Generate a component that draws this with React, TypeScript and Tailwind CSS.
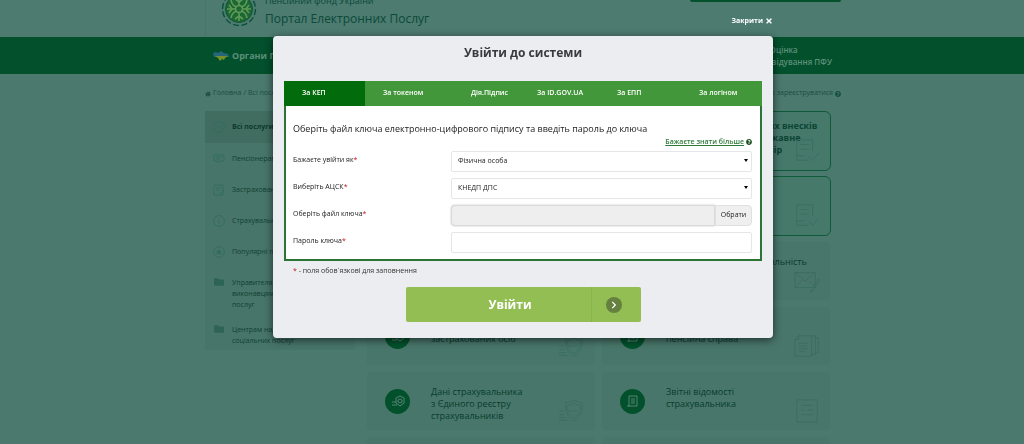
import { useState } from 'react';
import type { ReactNode } from 'react';
import { FaHome, FaTimes, FaQuestionCircle, FaFolder, FaChevronRight } from 'react-icons/fa';

const tabs = ['За КЕП', 'За токеном', 'Дія.Підпис', 'За ID.GOV.UA', 'За ЕПП', 'За логіном'];

const menu = [
  { label: 'Всі послуги', icon: 'minus' },
  { label: 'Пенсіонерам', icon: 'card' },
  { label: 'Застрахованим особам', icon: 'doc' },
  { label: 'Страхувальникам', icon: 'info' },
  { label: 'Популярні послуги', icon: 'star' },
  { label: 'Управителям та виконавцям усіх послуг', icon: 'folder' },
  { label: 'Центрам надання соціальних послуг', icon: 'folder' },
];

type Card = { lines: string[]; mark: string; outlined?: boolean };

const cards: Card[] = [
  { lines: ['Запис на прийом'], mark: 'check', outlined: true },
  { lines: ['Облік сплати страхових внесків', 'на загальне чи на державне', 'страхування або договір'], mark: 'check', outlined: true },
  { lines: ['Звернення'], mark: 'check', outlined: true },
  { lines: ['Мої заяви'], mark: 'check', outlined: true },
  { lines: ['Електронна пенсія'], mark: 'mail' },
  { lines: ['Моя підприємницька діяльність'], mark: 'mail' },
  { lines: ['Дані з реєстру', 'застрахованих осіб'], mark: 'shield' },
  { lines: ['Електронна', 'пенсійна справа'], mark: 'papers' },
  { lines: ['Дані страхувальника', 'з Єдиного реєстру', 'страхувальників'], mark: 'shield' },
  { lines: ['Звітні відомості', 'страхувальника'], mark: 'sheet' },
  { lines: ['Повідомлення'], mark: 'shield' },
  { lines: ['Довідки'], mark: 'sheet' },
];

function Logo() {
  return (
    <svg viewBox="0 0 36 36" className="h-9 w-9" fill="none">
      <circle cx="18" cy="18" r="16.5" stroke="#0b4f3c" strokeWidth="1.4" strokeDasharray="6 2.6" />
      <circle cx="18" cy="18" r="13.5" fill="#1d6733" stroke="#0f5836" />
      <g stroke="#5f9a58" strokeWidth="1.6">
        <path d="M18 6v24M6 18h24" />
        <circle cx="18" cy="18" r="3.5" fill="#1d6733" />
        <path d="M10 9c1 5 3 6 6 7M26 9c-1 5-3 6-6 7M10 27c1-5 3-6 6-7M26 27c-1-5-3-6-6-7" />
        <path d="M14 8l4 3 4-3M14 28l4-3 4 3M8 14l3 4-3 4M28 14l-3 4 3 4" />
      </g>
    </svg>
  );
}

function MenuIcon({ name }: { name: string }) {
  if (name === 'folder') return <FaFolder className="h-2.5 w-3 text-[#2d6453]" />;
  return (
    <svg viewBox="0 0 12 12" className="h-3 w-3" fill="none" stroke="#2f6c5b" strokeWidth="0.8">
      {name === 'card' && <path d="M1 2h10v6H7L5 10V8H1zM3 4h6M3 6h4" />}
      {name === 'doc' && <path d="M1 1h9v10H1zM3 4h5M3 6h3M6 8l2 2 3-4" />}
      {(name === 'minus' || name === 'info' || name === 'star') && <circle cx="6" cy="6" r="5.4" />}
      {name === 'minus' && <path d="M3.5 6h5" />}
      {name === 'info' && <path d="M6 5v4M6 3v1" />}
      {name === 'star' && <path d="M6 3.5L8 8.5 3.5 5.5h5L4 8.5z" />}
    </svg>
  );
}

function Mark({ name }: { name: string }) {
  return (
    <svg viewBox="0 0 28 28" className="absolute bottom-1.5 right-2.5 h-[26px] w-[26px]" fill="none" stroke="#396e60" strokeWidth="1">
      {name === 'check' && <path d="M20 14V2H3v22h13M7 7h9M7 12h9M2 19h9M16 20l4 4 7-8" />}
      {name === 'mail' && <path d="M1 5h22v16H1zM1 5l11 9L23 5M1 21l8-8M23 21l-6-7M18 24l8-12 2 1-8 12-3 1z" />}
      {name === 'shield' && <path d="M16 2c3 2 6 3 9 3 1 8-1 15-9 20-7-4-9-10-9-20 3 0 6-1 9-3zM16 5c2 2 4 3 7 3 0 6-2 11-7 14-5-3-7-8-7-14 3 0 5-1 7-3zM12 14h8M1 14h4M0 18h6M0 21h8M0 24h10" />}
      {name === 'papers' && <path d="M5 3h14v22H1V7zM19 3h4v20h-4M23 5h3v16h-3M5 3v4H1M5 11h10M5 14h10M5 17h10M5 20h7" />}
      {name === 'sheet' && <path d="M3 2h22v24H3zM8 8h12M8 13h3M15 13h6M8 18h12" />}
    </svg>
  );
}

function ServiceCard({ lines, mark, outlined }: Card) {
  return (
    <a
      href="#"
      className={`relative flex h-[60px] items-center gap-[21px] rounded-md border pl-[18px] text-[9px] leading-3 ${
        outlined ? 'border-[#0f5a38] bg-[#47796b] font-bold text-[#0a4534]' : 'border-[#4a786c] bg-[#49766a] text-[#063d2d]'
      }`}
    >
      <span className="flex h-[25px] w-[25px] shrink-0 items-center justify-center rounded-full bg-[#02512c]">
        <svg viewBox="0 0 14 14" className="h-3.5 w-3.5" fill="none" stroke="#568475">
          {mark === 'shield' ? (
            <path d="M5 4l4-2 4 2v5l-4 3-4-3zM7 6l2-1 2 1v2L9 9 7 8zM1 8h4M1 11h5" />
          ) : (
            <path d="M3 2h8v10H3zM5 5h4M5 7h4M5 9h4M1 12h3" />
          )}
        </svg>
      </span>
      <span className={`self-start whitespace-nowrap ${outlined ? 'pt-2' : 'pt-3.5'}`}>
        {lines.map((line) => (
          <span key={line} className="block">{line}</span>
        ))}
      </span>
      <Mark name={mark} />
    </a>
  );
}

function Field({ id, label, children }: { id: string; label: string; children: ReactNode }) {
  return (
    <div className="flex h-[21px]">
      <label htmlFor={id} className="w-[158px] shrink-0 pt-[3px] text-[7px] leading-3 text-[#222]">
        {label}<span className="text-[#c01818]">*</span>
      </label>
      {children}
    </div>
  );
}

function Select({ id, option }: { id: string; option: string }) {
  return (
    <div className="relative flex-1">
      <select id={id} className="block h-[21px] w-full appearance-none rounded-xs border border-[#e6e6e6] bg-white px-1.5 text-[7px] text-[#222]">
        <option>{option}</option>
      </select>
      <span className="pointer-events-none absolute right-1 top-2 border-x-2 border-t-3 border-x-transparent border-t-black" />
    </div>
  );
}

function LoginDialog() {
  const [active, setActive] = useState(0);

  return (
    <div role="dialog" aria-labelledby="login-title" className="rounded-sm bg-[#ecedf0] px-[11px] pb-4 shadow-[0_2px_8px_rgba(0,0,0,0.6)]">
      <h2 id="login-title" className="pb-[19px] pt-2 text-center text-[12px] font-bold leading-[18px] text-[#3b3b3e]">
        Увійти до системи
      </h2>
      <div role="tablist" className="grid grid-cols-[81fr_88fr_66fr_80fr_82fr_81fr]">
        {tabs.map((tab, i) => (
          <button
            key={tab}
            role="tab"
            aria-selected={i === active}
            onClick={() => setActive(i)}
            className={`h-[25px] whitespace-nowrap pl-[18px] text-left text-[7px] font-semibold text-white ${
              i === active ? 'bg-[#026b0b]' : 'bg-[#43973b]'
            }`}
          >
            {tab}
          </button>
        ))}
      </div>
      <form onSubmit={(e) => e.preventDefault()}>
        <div className="border-2 border-t-0 border-[#2c7435] bg-white pb-1.5 pl-[7px] pr-2 pt-4">
          <p className="text-[9px] leading-[14px] text-[#222]">
            Оберіть файл ключа електронно-цифрового підпису та введіть пароль до ключа
          </p>
          <div className="flex h-[15px] items-start justify-end gap-0.5 text-[7px] font-semibold leading-3 text-[#2e7b3b]">
            <a href="#" className="underline">Бажаєте знати більше</a>
            <FaQuestionCircle className="mt-[3px] h-1.5 w-1.5 text-[#1a4d1d]" />
          </div>
          <div className="flex flex-col gap-1.5">
            <Field id="person" label="Бажаєте увійти як">
              <Select id="person" option="Фізична особа" />
            </Field>
            <Field id="center" label="Виберіть АЦСК">
              <Select id="center" option="КНЕДП ДПС" />
            </Field>
            <Field id="keyfile" label="Оберіть файл ключа">
              <input id="keyfile" readOnly className="min-w-0 flex-1 rounded-l-sm border border-[#dadada] bg-[#eee] px-1.5 text-[7px] shadow-[0_0_2px_rgba(0,0,0,0.25)]" />
              <button type="button" className="w-[37px] rounded-r-sm border border-[#e0e0e0] bg-[#efefef] text-[7px] text-[#222]">
                Обрати
              </button>
            </Field>
            <Field id="password" label="Пароль ключа">
              <input id="password" type="password" className="min-w-0 flex-1 rounded-xs border border-[#e6e6e6] bg-white px-1.5 text-[7px]" />
            </Field>
          </div>
        </div>
        <p className="px-[9px] pt-1 text-[7px] leading-3 text-[#333]">
          <span className="text-[#c01818]">*</span> - поля обов`язкові для заповнення
        </p>
        <button type="submit" className="mx-auto mt-2.5 flex h-[35px] w-[235px] items-center rounded-xs bg-[#92be54] text-white">
          <span className="flex-1 pl-6 text-center text-[12px] font-bold">Увійти</span>
          <span className="flex h-full w-[50px] items-center border-l border-[#8ab44e] pl-[14px]">
            <span className="flex h-4 w-4 items-center justify-center rounded-full bg-[#66813f]">
              <FaChevronRight className="h-2 w-2" />
            </span>
          </span>
        </button>
      </form>
    </div>
  );
}

export default function App() {
  return (
    <div className="h-screen overflow-hidden bg-[#4b796d] font-['Open_Sans','Noto_Sans',sans-serif]">
      <header className="h-[37px] overflow-hidden bg-[#4d7b70] pl-[22px]">
        <div className="mx-auto flex h-full max-w-[636px] items-end border-l border-[#477569] pl-[15px]">
          <div className="mb-2.5 shrink-0">
            <Logo />
          </div>
          <div className="ml-2 flex-1 pb-2 text-[#0b4939]">
            <p className="text-[9px] leading-4">Пенсійний фонд України</p>
            <h1 className="text-[12px] leading-5">Портал Електронних Послуг</h1>
          </div>
          <div className="h-9 w-[151px] self-start">
            <div className="h-0.5 rounded-b-xs bg-[#02512c]" />
          </div>
        </div>
      </header>

      <nav className="h-[37px] bg-[#02502c] pl-[22px]">
        <div className="mx-auto flex h-full max-w-[636px] items-center justify-between pl-2 pr-[9px] text-[#5d8f7a]">
          <a href="#" className="flex items-center gap-[3px] text-[9px] font-bold leading-3">
            <svg viewBox="0 0 16 12" className="h-3 w-4">
              <path d="M0 3l3-1 2 1 3-2 3 2 4 1 1 3H1z" fill="#25667a" />
              <path d="M2 6h13l-3 2-1 2-2-1-2 2-2-3z" fill="#768f2b" />
            </svg>
            Органи ПФУ
          </a>
          <a href="#" className="text-[8px] font-semibold leading-3">
            <span className="block pl-2.5">Оцінка</span>
            <span className="block">відвідування ПФУ</span>
          </a>
        </div>
      </nav>

      <main className="pl-[22px]">
        <div className="mx-auto max-w-[636px]">
          <div className="flex h-[37px] items-center justify-between pt-0.5 text-[7px] text-[#174f40]">
            <div className="flex items-center gap-0.5">
              <FaHome className="h-1.5 w-1.5" />
              <a href="#">Головна</a> / <span>Всі послуги</span>
            </div>
            <a href="#" className="flex items-center gap-0.5">
              Як зареєструватися <FaQuestionCircle className="h-1.5 w-1.5" />
            </a>
          </div>
          <div className="flex items-start gap-[11px] pr-2.5">
            <ul className="w-[150px] shrink-0 bg-[#487569] text-[7px]">
              {menu.map(({ label, icon }, i) => (
                <li key={label}>
                  <a
                    href="#"
                    className={`flex items-start gap-[7px] px-2 pt-2.5 leading-[11px] ${
                      i === 0 ? 'min-h-8 bg-[#416d61] font-bold text-[#0a3b2d]' : 'min-h-[31px] pb-1 text-[#103f32]'
                    }`}
                  >
                    <span className="shrink-0"><MenuIcon name={icon} /></span>
                    <span className={icon === 'folder' ? 'w-[68px]' : 'whitespace-nowrap'}>{label}</span>
                  </a>
                </li>
              ))}
            </ul>
            <div className="grid flex-1 grid-cols-2 gap-[5px]">
              {cards.map((card) => (
                <ServiceCard key={card.lines[0]} {...card} />
              ))}
            </div>
          </div>
        </div>
      </main>

      <div className="fixed inset-0 pl-[22px] pt-3.5">
        <div className="mx-auto max-w-[500px]">
          <div className="flex h-[22px] items-start justify-end">
            <button className="flex items-center gap-0.5 text-[7px] font-bold leading-[14px] text-white">
              Закрити <FaTimes className="h-2 w-2" />
            </button>
          </div>
          <LoginDialog />
        </div>
      </div>
    </div>
  );
}
